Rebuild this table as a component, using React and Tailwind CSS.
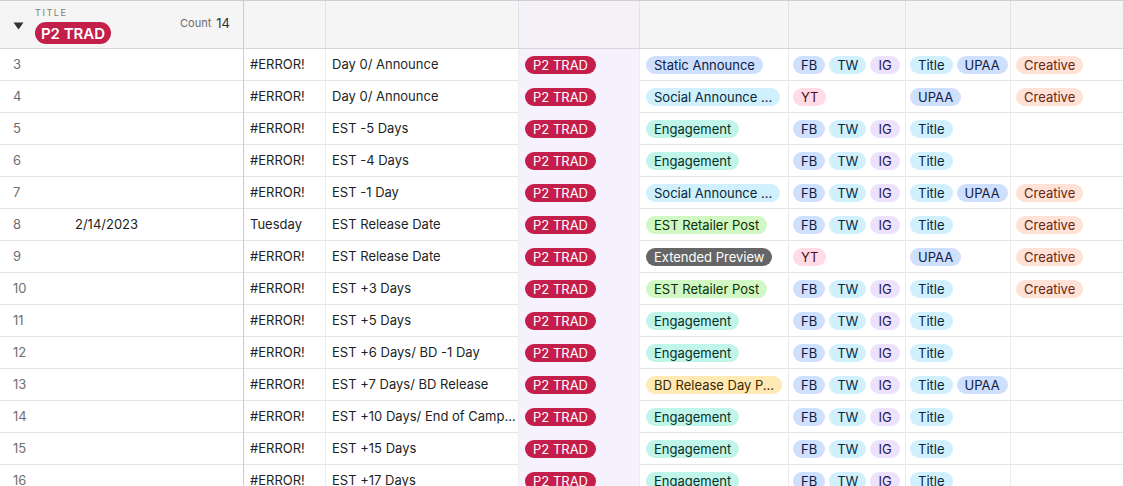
import React from "react";

const C = {
  blue: "bg-[#cfdffe] text-[#0c1c45]",
  cyan: "bg-[#d0f0fd] text-[#07283b]",
  purple: "bg-[#ede2fe] text-[#2b1354]",
  pink: "bg-[#ffdce5] text-[#4c0c1c]",
  orange: "bg-[#fee2d5] text-[#6b2613]",
  teal: "bg-[#c2f5e9] text-[#05302a]",
  green: "bg-[#d1f7c4] text-[#0d3005]",
  yellow: "bg-[#ffeab6] text-[#3b2800]",
  gray: "bg-[#666666] text-white",
};

const TYPES = {
  static: ["Static Announce", "blue"],
  social: ["Social Announce ...", "cyan"],
  eng: ["Engagement", "teal"],
  retail: ["EST Retailer Post", "green"],
  ext: ["Extended Preview", "gray"],
  bd: ["BD Release Day P...", "yellow"],
};

const CH = { FB: "blue", TW: "cyan", IG: "purple", YT: "pink" };
const AS = { Title: "cyan", UPAA: "blue" };

const fti = ["FB", "TW", "IG"];

const rows = [
  { n: 3, e: "Day 0/ Announce", t: "static", ch: fti, as: ["Title", "UPAA"], cr: true },
  { n: 4, e: "Day 0/ Announce", t: "social", ch: ["YT"], as: ["UPAA"], cr: true },
  { n: 5, e: "EST -5 Days", t: "eng", ch: fti, as: ["Title"] },
  { n: 6, e: "EST -4 Days", t: "eng", ch: fti, as: ["Title"] },
  { n: 7, e: "EST -1 Day", t: "social", ch: fti, as: ["Title", "UPAA"], cr: true },
  { n: 8, d: "2/14/2023", day: "Tuesday", e: "EST Release Date", t: "retail", ch: fti, as: ["Title"], cr: true },
  { n: 9, e: "EST Release Date", t: "ext", ch: ["YT"], as: ["UPAA"], cr: true },
  { n: 10, e: "EST +3 Days", t: "retail", ch: fti, as: ["Title"], cr: true },
  { n: 11, e: "EST +5 Days", t: "eng", ch: fti, as: ["Title"] },
  { n: 12, e: "EST +6 Days/ BD -1 Day", t: "eng", ch: fti, as: ["Title"] },
  { n: 13, e: "EST +7 Days/ BD Release", t: "bd", ch: fti, as: ["Title", "UPAA"] },
  { n: 14, e: "EST +10 Days/ End of Camp...", t: "eng", ch: fti, as: ["Title"] },
  { n: 15, e: "EST +15 Days", t: "eng", ch: fti, as: ["Title"] },
  { n: 16, e: "EST +17 Days", t: "eng", ch: fti, as: ["Title"] },
];

function Pill({ color, children }) {
  return (
    <span
      className={`inline-flex h-[18px] items-center whitespace-nowrap rounded-full px-[8px] text-[13px] leading-none ${C[color]}`}
    >
      {children}
    </span>
  );
}

function Trad() {
  return (
    <span className="inline-flex h-[18px] items-center whitespace-nowrap rounded-full bg-[#c41f4b] px-[8px] text-[13px] leading-none text-white">
      P2 TRAD
    </span>
  );
}

const cell = "flex h-[32px] shrink-0 items-center overflow-hidden border-r border-[#ececec]";

export default function App() {
  return (
    <div
      className="h-[486px] w-[1123px] overflow-hidden bg-white text-[13px] text-[#1d1f25]"
      style={{ fontFamily: "Inter, 'Liberation Sans', sans-serif" }}
    >
      {/* header */}
      <div className="flex h-[49px] border-t border-b border-t-[#cfcfcf] border-b-[#d6d6d6] bg-[#f5f5f5]">
        <div className="relative flex w-[244px] shrink-0 border-r border-[#cccccc]">
          <div className="flex w-[35px] items-center justify-center pt-[2px] pl-[1px]">
            <svg width="11" height="8" viewBox="0 0 11 8" className="mt-[1px]">
              <path d="M0.5 0.5 L10.5 0.5 L5.5 7.5 Z" fill="#333" />
            </svg>
          </div>
          <div className="flex flex-col pt-[6px]">
            <span className="text-[9px] leading-[11px] tracking-[1.6px] text-[#7a7a7a]">TITLE</span>
            <span className="mt-[4px] inline-flex h-[22px] w-[76px] items-center justify-center rounded-full bg-[#c41f4b] text-[15px] font-semibold leading-none text-white">
              P2 TRAD
            </span>
          </div>
          <div className="ml-auto flex items-center gap-[5px] pr-[13px] pb-[2px]">
            <span className="text-[11px] text-[#6b6b6b]">Count</span>
            <span className="text-[13px] text-[#333]">14</span>
          </div>
        </div>
        <div className="w-[82px] shrink-0 border-r border-[#e2e2e2]" />
        <div className="w-[193px] shrink-0 border-r border-[#e2e2e2]" />
        <div className="w-[121px] shrink-0 border-r border-[#e2e2e2] bg-[#f4f2f7]" />
        <div className="w-[149px] shrink-0 border-r border-[#e2e2e2]" />
        <div className="w-[117px] shrink-0 border-r border-[#e2e2e2]" />
        <div className="w-[105px] shrink-0 border-r border-[#e2e2e2]" />
        <div className="flex-1" />
      </div>

      {/* body */}
      {rows.map((r) => {
        const [tl, tc] = TYPES[r.t];
        return (
          <div key={r.n} className="flex h-[32px] border-b border-[#e5e5e5]">
            <div className="flex h-[32px] w-[244px] shrink-0 items-center border-r border-[#cccccc]">
              <span className="w-[75px] pl-[13px] text-[#6f6f6f]">{r.n}</span>
              <span className="text-[#1d1f25]">{r.d || ""}</span>
            </div>
            <div className={`${cell} w-[82px] pl-[6px]`}>{r.day || "#ERROR!"}</div>
            <div className={`${cell} w-[193px] whitespace-nowrap pl-[6px]`}>{r.e}</div>
            <div className={`${cell} w-[121px] bg-[#f6f2fd] pl-[6px]`}>
              <Trad />
            </div>
            <div className={`${cell} w-[149px] pl-[6px]`}>
              <Pill color={tc}>{tl}</Pill>
            </div>
            <div className={`${cell} w-[117px] gap-[4px] pl-[4px]`}>
              {r.ch.map((c) => (
                <Pill key={c} color={CH[c]}>
                  {c}
                </Pill>
              ))}
            </div>
            <div className={`${cell} w-[105px] gap-[4px] pl-[4px]`}>
              {r.as.map((a) => (
                <Pill key={a} color={AS[a]}>
                  {a}
                </Pill>
              ))}
            </div>
            <div className="flex h-[32px] flex-1 items-center pl-[5px]">
              {r.cr && <Pill color="orange">Creative</Pill>}
            </div>
          </div>
        );
      })}
    </div>
  );
}
